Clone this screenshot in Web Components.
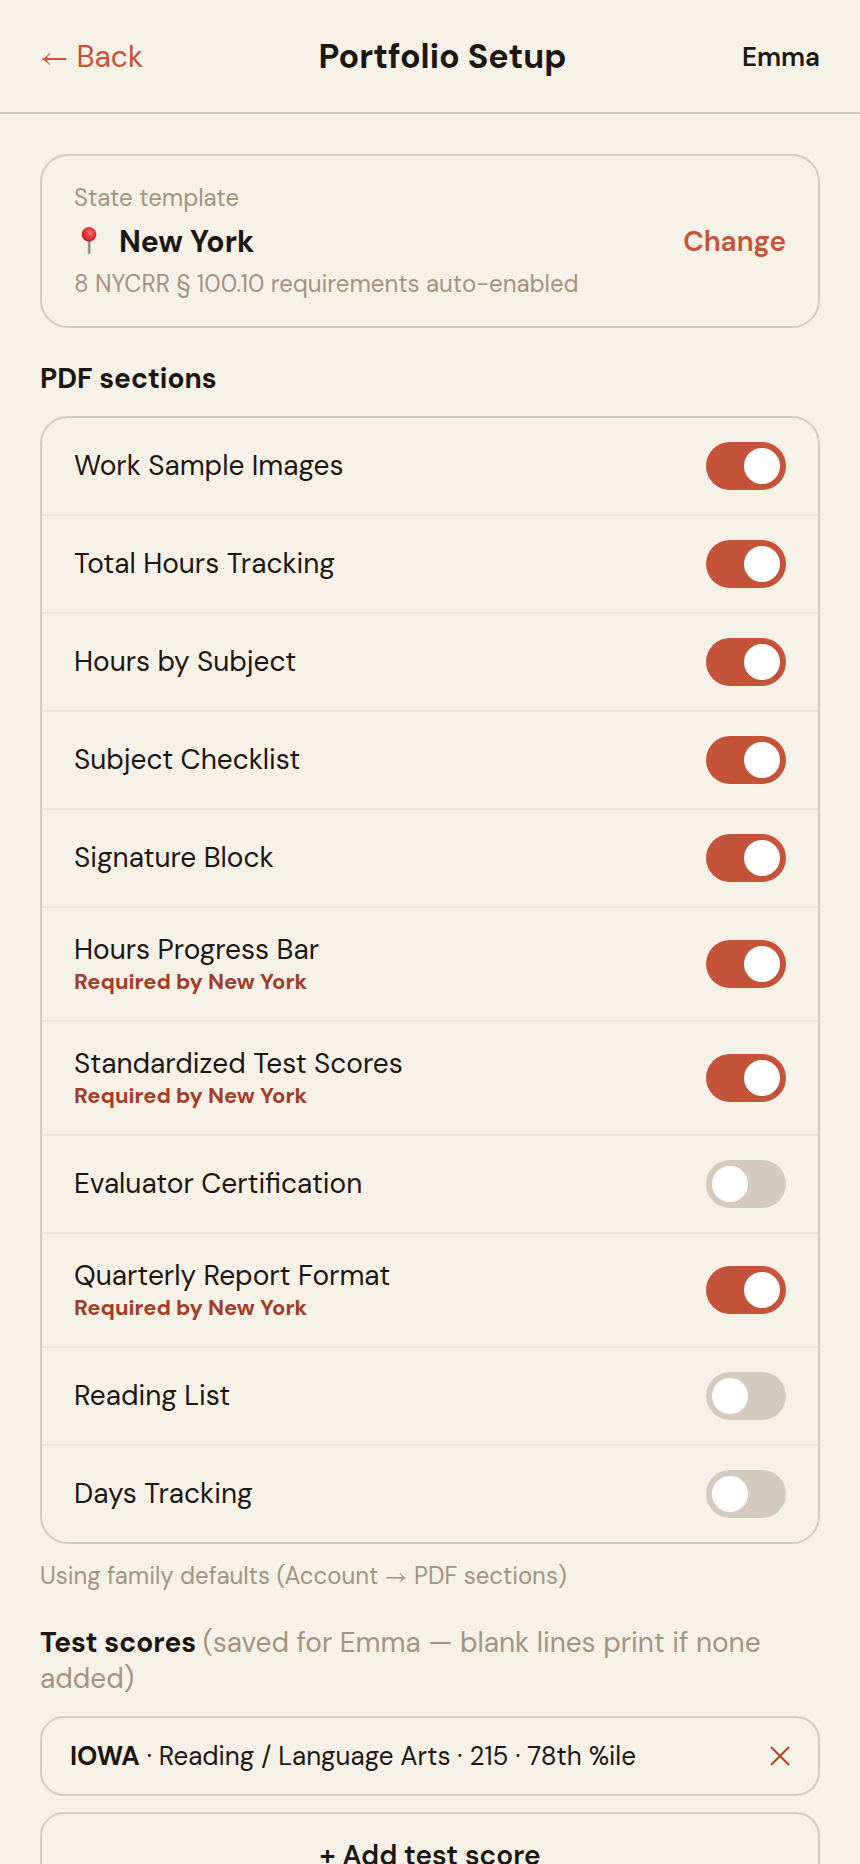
<!DOCTYPE html>
<html lang="en">
<head>
<meta charset="utf-8">
<meta name="viewport" content="width=device-width, initial-scale=1">
<title>Portfolio Setup</title>
<style>
  :root {
    --paper: #f6f1e6;
    --ink: #1c1712;
    --muted: #a39382;
    --line: #d4cbbe;
    --line-soft: #ece5d8;
    --accent: #c4533a;
    --accent-dark: #a33d27;
    --danger: #b8402b;
    --arrow-font: "STIX Two Math", "Liberation Sans", sans-serif;
  }

  body {
    margin: 0;
    background: var(--paper);
    color: var(--ink);
    font-family: "DM Sans", Inter, "Liberation Sans", sans-serif;
    font-size: 28px;
    line-height: 36px;
  }
</style>
</head>
<body>
<portfolio-setup student="Emma"></portfolio-setup>

<script>
class AppHeader extends HTMLElement {
  constructor(){
    super();
    this.attachShadow({ mode: 'open' });
  }

  connectedCallback(){
    this.shadowRoot.innerHTML = `
      <style>
      :host {
        display: block;
        border-bottom: 2px solid var(--line);
      }

      header {
        display: flex;
        align-items: center;
        justify-content: space-between;
        padding: 34px 40px 32px;
      }

      a {
        color: var(--accent);
        font-size: 30px;
        line-height: 40px;
        text-decoration: none;
      }

      .arrow {
        font-family: var(--arrow-font);
        line-height: 1;
      }

      h1 {
        margin: 0;
        font-size: 34px;
        line-height: 46px;
        font-weight: 700;
      }

      .student {
        font-size: 26px;
        line-height: 34px;
        font-weight: 600;
      }
      </style>
      <header>
        <a href="#back"><span class="arrow">←</span> Back</a>
        <h1><slot></slot></h1>
        <span class="student">${this.getAttribute('student')}</span>
      </header>
    `;
  }
}

customElements.define('app-header', AppHeader);


class StateCard extends HTMLElement {
  constructor(){
    super();
    this.attachShadow({ mode: 'open' });
  }

  connectedCallback(){
    this.shadowRoot.innerHTML = `
      <style>
      :host {
        display: block;
        padding: 28px 32px;
        border: 2px solid var(--line);
        border-radius: 28px;
      }

      p {
        margin: 0;
        color: var(--muted);
        font-size: 24px;
        line-height: 28px;
      }

      .row {
        display: flex;
        align-items: center;
        justify-content: space-between;
        padding: 9px 0 7px;
      }

      .state {
        display: flex;
        align-items: center;
        gap: 15px;
        font-size: 30px;
        line-height: 42px;
        font-weight: 700;
      }

      svg {
        width: 30px;
        height: 30px;
      }

      button {
        padding: 0;
        border: 0;
        background: none;
        color: var(--accent);
        font: inherit;
        font-weight: 600;
        cursor: pointer;
      }
      </style>
      <p>State template</p>
      <div class="row">
        <span class="state">
          <svg viewBox="0 0 30 30" role="img" aria-label="Pin">
            <defs>
              <radialGradient id="ball" cx="55%" cy="38%" r="62%">
                <stop offset="0" stop-color="#ff8f7c"/>
                <stop offset="0.3" stop-color="#f2484a"/>
                <stop offset="0.8" stop-color="#d92230"/>
                <stop offset="1" stop-color="#a51d22"/>
              </radialGradient>
              <linearGradient id="needle">
                <stop offset="0" stop-color="#b9b2aa"/>
                <stop offset="1" stop-color="#75695f"/>
              </linearGradient>
            </defs>
            <path d="M13.7 13h2.6v13l-1.3 1.6-1.3-1.6z" fill="url(#needle)"/>
            <circle cx="15" cy="7.4" r="7.3" fill="url(#ball)"/>
          </svg>
          <slot></slot>
        </span>
        <button type="button">Change</button>
      </div>
      <p>${this.getAttribute('note')}</p>
    `;
  }
}

customElements.define('state-card', StateCard);


class ToggleRow extends HTMLElement {
  constructor(){
    super();
    this.attachShadow({ mode: 'open' });
  }

  connectedCallback(){
    const hint = this.getAttribute('hint');

    this.shadowRoot.innerHTML = `
      <style>
      :host {
        display: block;
        border-bottom: 2px solid var(--line-soft);
      }

      :host(:last-child) {
        border-bottom: 0;
      }

      label {
        display: flex;
        align-items: center;
        justify-content: space-between;
        gap: 24px;
        padding: 24px 32px;
        cursor: pointer;
      }

      .text {
        display: flex;
        flex-direction: column;
      }

      small {
        color: var(--accent-dark);
        font-size: 22px;
        line-height: 28px;
        font-weight: 700;
      }

      input {
        appearance: none;
        flex: none;
        box-sizing: border-box;
        display: flex;
        width: 80px;
        height: 48px;
        margin: 0;
        padding: 6px;
        border-radius: 24px;
        background: var(--line);
        cursor: pointer;
      }

      input::before {
        content: "";
        width: 36px;
        height: 36px;
        border-radius: 50%;
        background: #fff;
      }

      input:checked {
        justify-content: flex-end;
        background: var(--accent);
      }
      </style>
      <label>
        <span class="text">
          <span><slot></slot></span>
          ${hint ? `<small>${hint}</small>` : ''}
        </span>
        <input type="checkbox" role="switch" ${this.hasAttribute('on') ? 'checked' : ''}>
      </label>
    `;
  }
}

customElements.define('toggle-row', ToggleRow);


class ScoreItem extends HTMLElement {
  constructor(){
    super();
    this.attachShadow({ mode: 'open' });
  }

  connectedCallback(){
    this.shadowRoot.innerHTML = `
      <style>
      :host {
        display: flex;
        align-items: center;
        justify-content: space-between;
        padding: 20px 24px 20px 28px;
        border: 2px solid var(--line);
        border-radius: 24px;
        font-size: 26px;
      }

      button {
        display: flex;
        padding: 4px;
        border: 0;
        background: none;
        color: var(--danger);
        cursor: pointer;
      }

      svg {
        width: 20px;
        height: 20px;
      }
      </style>
      <span><slot></slot></span>
      <button type="button" aria-label="Remove score">
        <svg viewBox="0 0 20 20" fill="none" stroke="currentColor" stroke-width="2">
          <path d="M1 1l18 18M19 1L1 19"/>
        </svg>
      </button>
    `;
  }
}

customElements.define('score-item', ScoreItem);


class PortfolioSetup extends HTMLElement {
  constructor(){
    super();
    this.attachShadow({ mode: 'open' });
  }

  getSections(){
    return [
      { name: 'Work Sample Images', on: true },
      { name: 'Total Hours Tracking', on: true },
      { name: 'Hours by Subject', on: true },
      { name: 'Subject Checklist', on: true },
      { name: 'Signature Block', on: true },
      { name: 'Hours Progress Bar', on: true, required: true },
      { name: 'Standardized Test Scores', on: true, required: true },
      { name: 'Evaluator Certification' },
      { name: 'Quarterly Report Format', on: true, required: true },
      { name: 'Reading List' },
      { name: 'Days Tracking' }
    ];
  }

  getStyles(){
    return `
      <style>
      :host {
        display: block;
        height: 100vh;
        overflow-y: auto;
        scrollbar-width: none;
      }

      main {
        padding: 40px;
      }

      h2 {
        margin: 33px 0 19px;
        font-size: 28px;
        line-height: 36px;
        font-weight: 700;
      }

      h2 span {
        color: var(--muted);
        font-weight: 400;
      }

      .list {
        border: 2px solid var(--line);
        border-radius: 28px;
        overflow: hidden;
      }

      .note {
        margin: 16px 0 32px;
        color: var(--muted);
        font-size: 24px;
        line-height: 32px;
      }

      .arrow {
        font-family: var(--arrow-font);
        line-height: 1;
      }

      .scores {
        display: flex;
        flex-direction: column;
        gap: 16px;
      }

      .add {
        padding: 24px;
        border: 2px solid var(--line);
        border-radius: 24px;
        background: none;
        color: inherit;
        font: inherit;
        font-weight: 600;
        cursor: pointer;
      }
      </style>
    `;
  }

  connectedCallback(){
    const student = this.getAttribute('student');
    const rows = this.getSections().map(s => `
      <toggle-row ${s.on ? 'on' : ''} ${s.required ? 'hint="Required by New York"' : ''}>${s.name}</toggle-row>
    `).join('');

    this.shadowRoot.innerHTML = `
      ${this.getStyles()}
      <app-header student="${student}">Portfolio Setup</app-header>
      <main>
        <state-card note="8 NYCRR § 100.10 requirements auto-enabled">New York</state-card>
        <h2>PDF sections</h2>
        <div class="list">${rows}</div>
        <p class="note">Using family defaults (Account <span class="arrow">→</span> PDF sections)</p>
        <h2>Test scores <span>(saved for ${student} — blank lines print if none added)</span></h2>
        <div class="scores">
          <score-item><b>IOWA</b> · Reading / Language Arts · 215 · 78th %ile</score-item>
          <button type="button" class="add">+ Add test score</button>
        </div>
      </main>
    `;
  }
}

customElements.define('portfolio-setup', PortfolioSetup);
</script>
</body>
</html>
